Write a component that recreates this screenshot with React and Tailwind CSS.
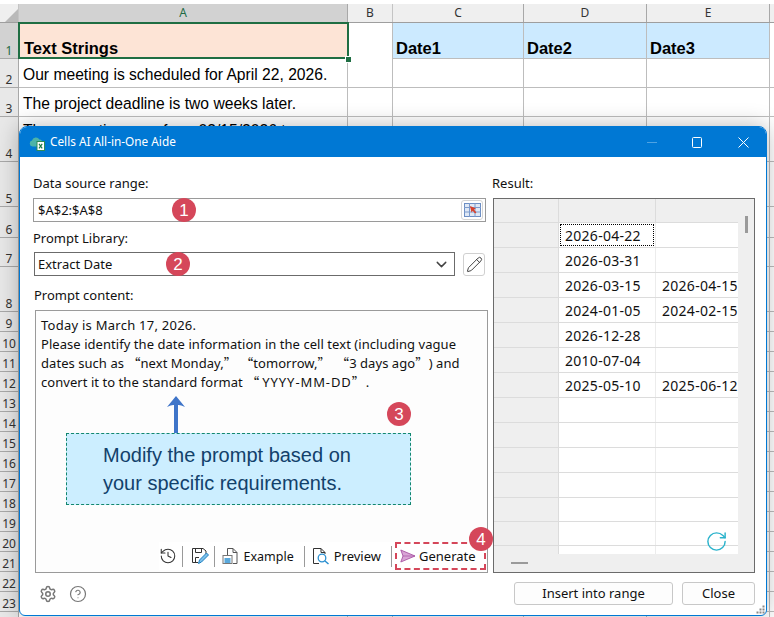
import React from "react";
import { ChevronDown, Settings, CircleHelp, RotateCw, History, Pencil } from "lucide-react";

const ROWS = [
  { n: 1, h: "h-[36px]" }, { n: 2, h: "h-[29px]", a: "Our meeting is scheduled for April 22, 2026." },
  { n: 3, h: "h-[29px]", a: "The project deadline is two weeks later." },
  { n: 4, h: "h-[45px]", a: "The promotion runs from 03/15/2026 to 04/15/2026.", top: true },
  { n: 5, h: "h-[45px]" }, { n: 6, h: "h-[31px]" }, { n: 7, h: "h-[29px]" }, { n: 8, h: "h-[45px]" },
  ...Array.from({ length: 16 }, (_, i) => ({ n: 9 + i, h: "h-[20px]" })),
];

function Sheet() {
  return (
    <div className="w-[774px] h-[617px] overflow-hidden bg-white pt-1 font-['Liberation_Sans',sans-serif] text-black">
      <div className="flex h-[19px] bg-[#efefef] border-b border-[#9e9e9e] font-['Noto_Sans',sans-serif] text-[12px] text-[#333]">
        <div className="w-[19px] relative border-r border-[#c4c4c4]">
          <svg className="absolute right-0 bottom-0" width="13" height="13" viewBox="0 0 13 13"><path d="M13 0V13H0Z" fill="#b9b9b9" /></svg>
        </div>
        <div className="w-[329px] bg-[#d2d2d2] border-r border-[#a8a8a8] flex items-center justify-center text-[#1f6b45]">A</div>
        <div className="w-[45px] border-r border-[#c4c4c4] flex items-center justify-center">B</div>
        <div className="w-[131px] border-r border-[#a8a8a8] flex items-center justify-center">C</div>
        <div className="w-[123px] border-r border-[#a8a8a8] flex items-center justify-center">D</div>
        <div className="w-[123px] border-r border-[#a8a8a8] flex items-center justify-center">E</div>
        <div className="flex-1" />
      </div>
      {ROWS.map((r) => {
        const first = r.n === 1;
        const line = "border-r border-b border-[#bdbdbd]";
        return (
          <div key={r.n} className={`flex ${r.h}`}>
            <div className={`w-[19px] shrink-0 flex items-end justify-center border-r border-b border-[#a8a8a8] font-['Noto_Sans',sans-serif] text-[12px] leading-[15px] ${first ? "bg-[#d2d2d2] text-[#1f6b45]" : "bg-[#e8e8e8] text-[#333]"}`}>
              {r.n}
            </div>
            {first ? (
              <div className="relative w-[329px] shrink-0 bg-[#fde4d6] flex items-end pl-[5px] pb-[1px] text-[16.5px] leading-[20px] font-bold">
                Text Strings
                <div className="absolute -left-px -top-px w-[331px] h-[37px] border-2 border-[#1f6e43]" />
                <div className="absolute right-[-3px] bottom-[-3px] w-[5px] h-[5px] bg-[#1f6e43] outline outline-1 outline-white" />
              </div>
            ) : (
              <div className={`w-[329px] shrink-0 ${line} pl-[4px] overflow-hidden text-[15.65px] leading-[24px] ${r.top ? "pt-[2px]" : "flex items-end whitespace-nowrap"}`}>
                {r.a}
              </div>
            )}
            <div className={`w-[45px] shrink-0 ${first ? "border-r border-[#bdbdbd]" : line}`} />
            {["Date1", "Date2", "Date3"].map((d, i) => (
              <div key={d} className={`${i === 0 ? "w-[131px]" : "w-[123px]"} shrink-0 ${line} pl-[3px] flex items-end text-[16.5px] leading-[20px] font-bold ${first ? "bg-[#cceaff]" : ""}`}>
                {first ? d : ""}
              </div>
            ))}
            <div className={`flex-1 ${first ? "" : "border-b border-[#bdbdbd]"}`} />
          </div>
        );
      })}
    </div>
  );
}

function Badge({ n, className }) {
  return (
    <div className={`absolute w-[24px] h-[24px] rounded-full bg-[#d5475a] text-white flex items-center justify-center text-[17px] leading-none font-['Liberation_Sans',sans-serif] ${className}`}>
      {n}
    </div>
  );
}

function Logo() {
  return (
    <svg width="16" height="14" viewBox="0 0 16 14" className="mt-[3px]">
      <path d="M3.5 9.5A3 3 0 0 1 3 3.6 4 4 0 0 1 10.4 2.6 3 3 0 0 1 13 4H8v5.5Z" fill="#4db3a8" />
      <rect x="8" y="4.5" width="7.5" height="9" fill="#fff" stroke="#2e8b57" />
      <path d="M10 6.8l3.2 4.5M13.2 6.8L10 11.3" stroke="#1f7a45" strokeWidth="1.2" />
    </svg>
  );
}

function RangeIcon() {
  return (
    <svg width="17" height="14" viewBox="0 0 17 14">
      <rect x="0.5" y="0.5" width="16" height="13" fill="#dfe8f5" stroke="#6d8fc4" />
      <path d="M0 4.5H17M0 9H17M5.5 0V14M11 0V14" stroke="#7d9bcc" />
      <path d="M6 3l6 2.6-2 1 2.4 2.8-1.3 1.1-2.4-2.8-1.2 1.9Z" fill="#d9412b" />
    </svg>
  );
}

function SaveEdit() {
  return (
    <svg width="18" height="18" viewBox="0 0 18 18" fill="none">
      <path d="M1.5 1.5H12L15 4V7M1.5 1.5V15.5H7" stroke="#333" />
      <path d="M4.5 1.5V5.5H10.5V1.5M4.5 15V10.5H8" stroke="#333" />
      <path d="M7.5 16.5l1-3.5 7-7 2 2-7 7Z" fill="#7cc0ea" stroke="#1f7fc0" />
    </svg>
  );
}

function DocIcon() {
  return (
    <svg width="16" height="18" viewBox="0 0 16 18" fill="none">
      <path d="M5.5 8V1.5H11L15 5.5V16.5H11" stroke="#555" />
      <path d="M11 1.5V5.5H15" stroke="#555" />
      <rect x="1" y="8.5" width="9" height="8" fill="#fff" stroke="#777" />
      <rect x="2.5" y="11" width="6" height="5" fill="#5aa9dc" />
    </svg>
  );
}

function PreviewIcon() {
  return (
    <svg width="18" height="18" viewBox="0 0 18 18" fill="none">
      <path d="M7 16.5H1.5V1.5H9L13 5.5V7" stroke="#333" />
      <path d="M9 1.5V5.5H13" stroke="#333" />
      <circle cx="10" cy="11" r="3.8" stroke="#2a8fd0" strokeWidth="1.3" />
      <path d="M13 14l3.5 3" stroke="#2a8fd0" strokeWidth="1.5" />
    </svg>
  );
}

function Plane() {
  return (
    <svg width="16" height="14" viewBox="0 0 16 14">
      <path d="M0.8 1L15 7 0.8 13 3 7Z" fill="#d9a5d6" stroke="#a855a4" strokeWidth="0.9" strokeLinejoin="round" />
      <path d="M3 7H15" stroke="#a855a4" strokeWidth="0.7" />
    </svg>
  );
}

const Sep = () => <div className="w-px h-[21px] bg-[#9a9a9a]" />;
const Q = ({ c }) => <span className="font-['Noto_Sans_CJK_SC',sans-serif] leading-none">{c}</span>;

const RESULT = [
  ["2026-04-22", ""], ["2026-03-31", ""], ["2026-03-15", "2026-04-15"], ["2024-01-05", "2024-02-15"],
  ["2026-12-28", ""], ["2010-07-04", ""], ["2025-05-10", "2025-06-12"],
  ["", ""], ["", ""], ["", ""], ["", ""], ["", ""], ["", ""], ["", ""],
];

function ResultGrid() {
  return (
    <div className="relative ml-px mt-[6px] w-[262px] h-[375px] border border-[#6b6b6b] bg-[#efefef] flex flex-col">
      <div className="flex h-[355px] shrink-0">
        <div className="w-[244px] h-[355px] overflow-hidden">
          <div className="flex h-[24px] border-b border-[#dcdcdc]">
            <div className="w-[65px] border-r border-[#dcdcdc]" />
            <div className="w-[97px] border-r border-[#dcdcdc]" />
          </div>
          {RESULT.map((r, i) => (
            <div key={i} className={`flex ${i === 11 || i === 12 ? "h-[24px]" : "h-[25px]"} border-b border-[#dcdcdc]`}>
              <div className="w-[65px] shrink-0 border-r border-[#dcdcdc] bg-[#efefef]" />
              <div className="relative w-[97px] shrink-0 bg-white border-r border-[#ececec] pl-[6px] flex items-center text-[14px] tracking-[0.02em] whitespace-nowrap">
                {r[0]}
                {i === 0 && <div className="absolute left-px top-[1px] right-px bottom-[1px] border border-dotted border-black" />}
              </div>
              <div className="flex-1 bg-white pl-[6px] flex items-center text-[14px] tracking-[0.02em] whitespace-nowrap overflow-hidden">{r[1]}</div>
            </div>
          ))}
        </div>
        <div className="flex-1 relative">
          <div className="absolute left-[7px] top-[17px] w-[3px] h-[17px] bg-[#9a9a9a]" />
        </div>
      </div>
      <div className="h-[18px] shrink-0 relative">
        <div className="absolute left-[17px] top-[8px] w-[17px] h-[2px] bg-[#9a9a9a]" />
      </div>
      <RotateCw className="absolute left-[211px] top-[331px] text-[#2bb3cc]" size={23} strokeWidth={1.5} />
    </div>
  );
}

function Dialog() {
  return (
    <div className="absolute left-[19px] top-[126px] w-[748px] h-[490px] flex flex-col bg-white border border-[#0078d4] rounded-t-[8px] rounded-b-[6px] shadow-[0_0_22px_rgba(0,0,0,0.28)] font-['Noto_Sans',sans-serif] text-[13px] text-[#111]">
      <div className="h-[30px] shrink-0 bg-[#0078d4] rounded-t-[7px] flex items-center text-white pl-[9px] pr-[17px]">
        <Logo />
        <span className="ml-[5px] text-[11.8px]">Cells AI All-in-One Aide</span>
        <div className="flex-1" />
        <div className="w-[10px] h-px bg-[#4fa3e3] mr-[35px]" />
        <svg className="mr-[36px]" width="10" height="11" viewBox="0 0 10 11" fill="none"><rect x="0.5" y="0.5" width="9" height="10" rx="1" stroke="#fff" /></svg>
        <svg width="11" height="11" viewBox="0 0 11 11" fill="none"><path d="M0.5 0.5L10.5 10.5M10.5 0.5L0.5 10.5" stroke="#fff" /></svg>
      </div>
      <div className="relative flex-1 flex flex-col pl-[13px] pr-[11px] pt-[17px]">
        <div className="flex gap-[4px]">
          <div className="relative w-[455px]">
            <div className="h-[18px] leading-[18px]">Data source range:</div>
            <div className="mt-[6px] w-[453px] h-[24px] border border-[#9a9a9a] flex items-center justify-between pl-[4px] pr-[2px]">
              <span className="pt-[1px]">$A$2:$A$8</span>
              <div className="w-[22px] h-[20px] rounded-[3px] border border-[#d5d5d5] flex items-center justify-center"><RangeIcon /></div>
            </div>
            <div className="mt-[7px] h-[18px] leading-[18px]">Prompt Library:</div>
            <div className="mt-[5px] flex items-center ml-px">
              <div className="w-[421px] h-[24px] border border-[#6b6b6b] flex items-center justify-between pl-[3px] pr-[4px]">
                <span className="pt-[2px]">Extract Date</span>
                <ChevronDown size={17} className="text-[#444]" strokeWidth={2} />
              </div>
              <div className="ml-[8px] w-[22px] h-[23px] rounded-[3px] border border-[#d0d0d0] flex items-center justify-center">
                <Pencil size={17} strokeWidth={1.3} className="text-[#333]" />
              </div>
            </div>
            <div className="mt-[10px] ml-px h-[18px] leading-[18px]">Prompt content:</div>
            <div className="relative mt-[6px] ml-[2px] w-[453px] h-[263px] border border-[#9a9a9a] bg-[#fdfdfd] flex flex-col px-[5px] pt-[5px] leading-[19px] text-[13px] tracking-[0.05px] whitespace-nowrap">
              <div className="h-[19px] tracking-[0.25px]">Today is March 17, 2026.</div>
              <div className="h-[19px]">Please identify the date information in the cell text (including vague</div>
              <div className="h-[19px]">dates such as <Q c="“" />next Monday,<Q c="”" /> <Q c="“" />tomorrow,<Q c="”" /><span className="ml-[2px]"> </span><Q c="“" />3 days ago<Q c="”" /><span className="ml-[7px]">) and</span></div>
              <div className="h-[19px]">convert it to the standard format <Q c="“" /><span className="ml-[3px] tracking-[0.9px]">YYYY-MM-DD</span><Q c="”" /><span className="ml-[1px]">.</span></div>

              <svg className="absolute left-[131px] top-[85px]" width="18" height="38" viewBox="0 0 18 38">
                <path d="M9 0L18 11Q13 8.5 11 9V38H7V9Q5 8.5 0 11Z" fill="#3f75c9" />
              </svg>
              <div className="absolute left-[30px] top-[122px] w-[345px] h-[72px] border border-dashed border-[#12876f] bg-[#cceeff] pl-[36px] pt-[7px] font-['Liberation_Sans',sans-serif] text-[20px] leading-[28px] tracking-normal text-[#12416b]">
                Modify the prompt based on<br />your specific requirements.
              </div>

              <div className="mt-auto mb-[2px] -mr-[4px] flex items-center justify-end h-[28px] self-end bg-white text-[13px] tracking-normal">
                <History size={18} strokeWidth={1.4} className="text-[#333]" />
                <div className="ml-[5px]"><Sep /></div>
                <div className="ml-[8px]"><SaveEdit /></div>
                <div className="ml-[5px]"><Sep /></div>
                <div className="ml-[7px]"><DocIcon /></div>
                <span className="ml-[5px] text-[12.5px]">Example</span>
                <div className="ml-[10px]"><Sep /></div>
                <div className="ml-[7px]"><PreviewIcon /></div>
                <span className="ml-[4px]">Preview</span>
                <div className="ml-[10px]"><Sep /></div>
                <div className="ml-[3px] w-[91px] h-[28px] border-2 border-dashed border-[#d5475a] flex items-center pl-[3px]">
                  <Plane />
                  <span className="ml-[3px]">Generate</span>
                </div>
              </div>
            </div>
          </div>
          <div>
            <div className="h-[18px] leading-[18px]">Result:</div>
            <ResultGrid />
          </div>
        </div>
        <div className="mt-[9px] flex items-center justify-between ml-[6px]">
          <div className="flex items-center gap-[12px]">
            <Settings size={18} strokeWidth={2} className="text-[#777]" />
            <CircleHelp size={18} strokeWidth={1.6} className="text-[#777]" />
          </div>
          <div className="flex gap-[9px]">
            <div className="w-[159px] h-[23px] rounded-[3px] border border-[#c8c8c8] bg-[#fdfdfd] flex items-center justify-center">Insert into range</div>
            <div className="w-[73px] h-[23px] rounded-[3px] border border-[#c8c8c8] bg-[#fdfdfd] flex items-center justify-center">Close</div>
          </div>
        </div>
        <svg className="absolute right-[1px] bottom-[1px]" width="9" height="9" viewBox="0 0 9 9" fill="#8a8a8a">
          <rect x="6.5" y="0.5" width="2" height="2" /><rect x="3.5" y="3.5" width="2" height="2" /><rect x="6.5" y="3.5" width="2" height="2" />
          <rect x="0.5" y="6.5" width="2" height="2" /><rect x="3.5" y="6.5" width="2" height="2" /><rect x="6.5" y="6.5" width="2" height="2" />
        </svg>
      </div>
      <Badge n="1" className="left-[152px] top-[71px]" />
      <Badge n="2" className="left-[146px] top-[125px]" />
      <Badge n="3" className="left-[367px] top-[275px]" />
      <Badge n="4" className="left-[449px] top-[400px]" />
    </div>
  );
}

export default function App() {
  return (
    <div className="relative w-[774px] h-[617px] overflow-hidden">
      <Sheet />
      <Dialog />
    </div>
  );
}
